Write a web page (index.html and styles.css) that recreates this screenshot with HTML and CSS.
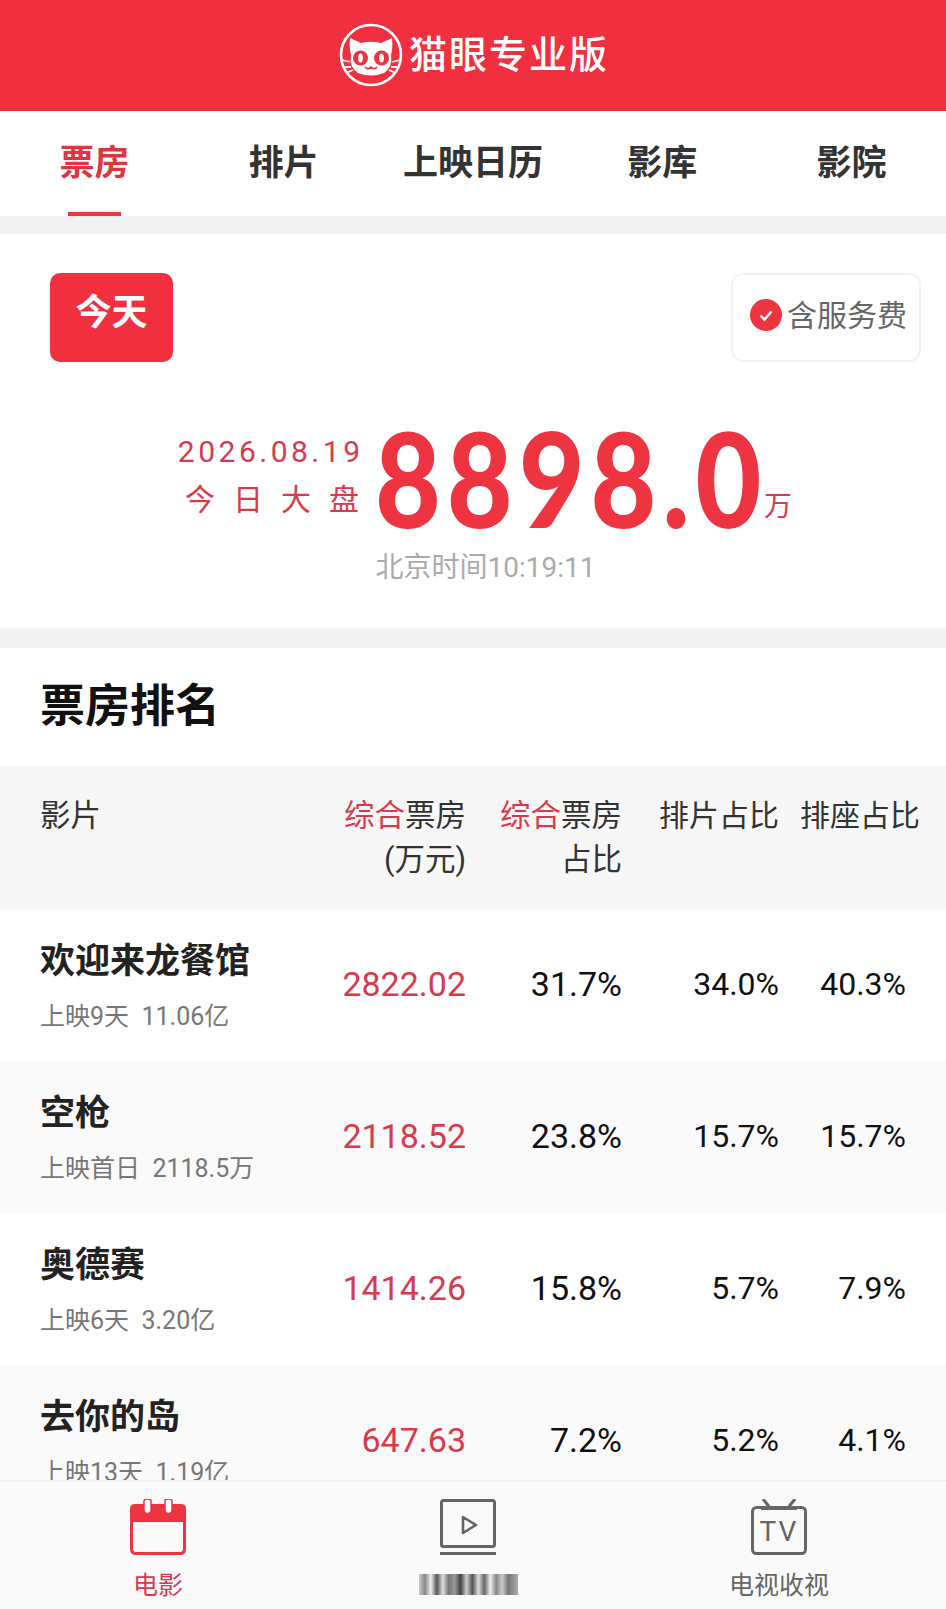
FILE: index.html
```html
<!DOCTYPE html>
<html lang="zh-CN">
  <head>
    <meta charset="UTF-8" />
    <meta name="viewport" content="width=device-width, initial-scale=1.0" />
    <title>猫眼专业版</title>
    <link rel="stylesheet" href="styles.css" />
  </head>
  <body>
    <div class="page">
      <header class="top-bar">
        <svg class="logo" viewBox="0 0 64 64" width="64" height="64">
          <circle cx="32" cy="32" r="30" fill="none" stroke="#fff" stroke-width="2.6" />
          <path d="M11 15 L22 20 Q32 17.5 42 20 L53 15 Q54 25 52 32 Q54 44 45 50 Q32 55 19 50 Q10 44 12 32 Q10 25 11 15 Z" fill="#fff" />
          <circle cx="21.5" cy="35" r="7.5" fill="#f1303f" />
          <circle cx="42.5" cy="35" r="7.5" fill="#f1303f" />
          <ellipse cx="21.5" cy="35" rx="2.4" ry="4.6" fill="#fff" />
          <ellipse cx="42.5" cy="35" rx="2.4" ry="4.6" fill="#fff" />
          <path d="M26 44 Q29 47.500 32 44 Q35 47.500 38 44" fill="none" stroke="#f1303f" stroke-width="1.6" />
          <path d="M3 37 L11 39 M4 44 L12 44 M7 50 L14 47 M61 37 L53 39 M60 44 L52 44 M57 50 L50 47" stroke="#fff" stroke-width="1.8" />
        </svg>
        <span class="brand">猫眼专业版</span>
      </header>

      <nav class="tabs">
        <a class="tab active">票房</a>
        <a class="tab">排片</a>
        <a class="tab">上映日历</a>
        <a class="tab">影库</a>
        <a class="tab">影院</a>
      </nav>

      <section class="summary">
        <div class="filters">
          <div class="today-btn">今天</div>
          <div class="fee-btn">
            <svg class="check" viewBox="0 0 32 32" width="32" height="32">
              <circle cx="16" cy="16" r="16" fill="#ee3440" />
              <path d="M10.500 16.500 L14.500 20.500 L21.500 12.500" fill="none" stroke="#fff" stroke-width="2.4" />
            </svg>
            <span>含服务费</span>
          </div>
        </div>
        <div class="total">
          <div class="total-label">
            <div class="total-date">2026.08.19</div>
            <div class="total-name">今日大盘</div>
          </div>
          <div class="total-num">8898.0</div>
          <div class="total-unit">万</div>
        </div>
        <div class="clock">北京时间10:19:11</div>
      </section>

      <section class="rank">
        <h2 class="rank-title">票房排名</h2>
        <div class="rank-head">
          <div>影片</div>
          <div class="num"><em>综合</em>票房<br />(万元)</div>
          <div class="num"><em>综合</em>票房<br />占比</div>
          <div class="num">排片占比</div>
          <div class="num">排座占比</div>
        </div>

        <div class="row">
          <div class="film-cell">
            <div class="film">欢迎来龙餐馆</div>
            <div class="film-sub">上映9天&nbsp; 11.06亿</div>
          </div>
          <div class="num money">2822.02</div>
          <div class="num">31.7%</div>
          <div class="num">34.0%</div>
          <div class="num">40.3%</div>
        </div>
        <div class="row alt">
          <div class="film-cell">
            <div class="film">空枪</div>
            <div class="film-sub">上映首日&nbsp; 2118.5万</div>
          </div>
          <div class="num money">2118.52</div>
          <div class="num">23.8%</div>
          <div class="num">15.7%</div>
          <div class="num">15.7%</div>
        </div>
        <div class="row">
          <div class="film-cell">
            <div class="film">奥德赛</div>
            <div class="film-sub">上映6天&nbsp; 3.20亿</div>
          </div>
          <div class="num money">1414.26</div>
          <div class="num">15.8%</div>
          <div class="num">5.7%</div>
          <div class="num">7.9%</div>
        </div>
        <div class="row alt">
          <div class="film-cell">
            <div class="film">去你的岛</div>
            <div class="film-sub">上映13天&nbsp; 1.19亿</div>
          </div>
          <div class="num money">647.63</div>
          <div class="num">7.2%</div>
          <div class="num">5.2%</div>
          <div class="num">4.1%</div>
        </div>
      </section>

      <footer class="bottom-bar">
        <div class="bottom-item active">
          <svg viewBox="0 0 56 56" width="56" height="56">
            <path d="M1.500 22 V50 Q1.500 54.500 6 54.500 H50 Q54.500 54.500 54.500 50 V22" fill="none" stroke="#ee3440" stroke-width="3" />
            <path d="M0 23 V10 Q0 5 5 5 H51 Q56 5 56 10 V23 Z" fill="#ee3440" />
            <path d="M14 2 V11 A3.500 3.500 0 0 0 21 11 V2 A3.500 2 0 0 0 14 2 Z M35 2 V11 A3.500 3.500 0 0 0 42 11 V2 A3.500 2 0 0 0 35 2 Z" fill="#fff" stroke="#ee3440" stroke-width="1.500" />
          </svg>
          <span>电影</span>
        </div>
        <div class="bottom-item">
          <svg viewBox="0 0 56 56" width="56" height="56">
            <rect x="1.500" y="1.500" width="53" height="46" rx="2" fill="none" stroke="#666" stroke-width="3" />
            <path d="M23 18 L36 26 L23 34 Z" fill="none" stroke="#666" stroke-width="2.600" stroke-linejoin="round" />
            <rect x="0" y="53" width="56" height="3" fill="#666" />
          </svg>
          <span class="blurred"></span>
        </div>
        <div class="bottom-item">
          <svg viewBox="0 0 56 56" width="56" height="56">
            <path d="M12 0 L18 7.500 M44 0 L38 7.500" stroke="#666" stroke-width="3" />
            <rect x="1.500" y="8.500" width="53" height="46" rx="4" fill="none" stroke="#666" stroke-width="3" />
            <path d="M10 8.500 H46 V11 H10 Z" fill="#666" />
            <text x="28" y="42" text-anchor="middle" class="tv-text">TV</text>
          </svg>
          <span>电视收视</span>
        </div>
      </footer>
    </div>
  </body>
</html>
```

FILE: styles.css
```css
* {
  margin: 0;
  padding: 0;
  box-sizing: border-box;
}

html,
body {
  height: 100%;
  overflow: hidden;
}

body {
  background-color: #f3f3f3;
  color: #222;
  font-family: "Roboto", "Noto Sans CJK SC", sans-serif;
}

.page {
  position: relative;
  height: 1609px;
  overflow: hidden;
}

.top-bar {
  display: flex;
  justify-content: center;
  align-items: center;
  gap: 6px;
  height: 111px;
  padding: 0 0 2px 2px;
  background-color: #f1303f;
}

.brand {
  margin-bottom: 6px;
  color: #fff;
  font-size: 38px;
  font-weight: 500;
  letter-spacing: 2px;
}

.tabs {
  display: grid;
  grid-template-columns: repeat(5, 1fr);
  height: 105px;
  background-color: #fff;
}

.tab {
  position: relative;
  padding-top: 28px;
  text-align: center;
  font-size: 35px;
  font-weight: 700;
  line-height: 50px;
  color: #333;
}

.tab.active {
  color: #e0343f;
}

.tab.active::after {
  content: "";
  position: absolute;
  left: 68px;
  bottom: 0;
  width: 53px;
  height: 4px;
  background-color: #ee3440;
}

.summary {
  height: 394px;
  margin-top: 18px;
  padding-top: 39px;
  background-color: #fff;
}

.filters {
  display: flex;
  justify-content: space-between;
  padding: 0 25px 0 50px;
}

.today-btn {
  width: 123px;
  height: 89px;
  padding-top: 15px;
  border-radius: 10px;
  background-color: #f1303f;
  color: #fff;
  font-size: 36px;
  font-weight: 700;
  line-height: 50px;
  text-align: center;
}

.fee-btn {
  display: flex;
  align-items: flex-start;
  gap: 5px;
  width: 190px;
  height: 89px;
  padding: 24px 0 0 17px;
  border: 2px solid #f2f2f2;
  border-radius: 12px;
  color: #666;
  font-size: 30px;
  line-height: 34px;
}

.total {
  display: flex;
  align-items: flex-end;
  height: 125px;
  margin-top: 60px;
  padding-left: 171px;
  color: #ee3440;
}

.total-label {
  width: 190px;
  margin-right: 14px;
  padding-bottom: 23px;
  color: #d83a4c;
  font-size: 30px;
  line-height: 48px;
  text-align: right;
}

.total-date {
  letter-spacing: 3.500px;
  margin-right: -2.500px;
}

.total-name {
  letter-spacing: 18px;
  margin-right: -16px;
}

.total-num {
  width: 389px;
  margin-bottom: 20px;
  font-family: "Lato", sans-serif;
  font-size: 132px;
  font-weight: 900;
  line-height: 100px;
  letter-spacing: 7px;
  white-space: nowrap;
  transform: scaleX(0.86);
  transform-origin: left bottom;
}

.total-unit {
  padding-bottom: 22px;
  font-size: 28px;
  line-height: 36px;
  color: #d83a4c;
}

.clock {
  margin: 3px 0 0 25px;
  color: #ababab;
  font-size: 28px;
  line-height: 36px;
  text-align: center;
}

.rank {
  margin-top: 20px;
  background-color: #fff;
}

.rank-title {
  height: 118px;
  padding: 28px 0 0 40px;
  color: #111;
  font-size: 45px;
  font-weight: 700;
  line-height: 62px;
}

.rank-head,
.row {
  display: grid;
  padding: 0 40px;
  color: #111;
}

.rank-head {
  grid-template-columns: 1fr 156px 156px 157px 141px;
  height: 143px;
  padding: 28px 26px 0 40px;
  background-color: #f7f7f7;
  color: #333;
  font-size: 30.500px;
  line-height: 44px;
}

.rank-head .num:nth-child(n + 4) {
  font-size: 30px;
}

.rank-head em {
  font-style: normal;
  color: #d83a4c;
}

.row {
  grid-template-columns: 1fr 156px 156px 157px 127px;
  align-items: center;
  height: 152px;
}

.row:first-of-type {
  height: 155px;
}

.row.alt {
  background-color: #fafafa;
}

.num {
  text-align: right;
  white-space: nowrap;
}

.row .num {
  margin-bottom: 3px;
  font-size: 34px;
}

.row .num:nth-child(n + 4) {
  font-size: 32px;
}

.row .money {
  color: #d83a4c;
}

.film-cell {
  padding-top: 3px;
}

.film {
  margin-top: -2px;
  color: #222;
  font-size: 35px;
  font-weight: 700;
  line-height: 50px;
}

.film-sub {
  margin-top: 12px;
  color: #777;
  font-size: 25px;
  line-height: 36px;
}

.bottom-bar {
  position: absolute;
  left: 0;
  right: 0;
  top: 1480px;
  display: grid;
  grid-template-columns: 316px 304px 318px;
  height: 129px;
  border-top: 2px solid #f0f0f0;
  background-color: #fafafa;
}

.bottom-item {
  display: flex;
  flex-direction: column;
  align-items: center;
  gap: 16px;
  padding-top: 17px;
  color: #666;
  font-size: 25px;
  line-height: 30px;
}

.bottom-item.active {
  color: #d83a4c;
}

.tv-text {
  font-family: "Roboto", sans-serif;
  font-size: 28px;
  font-weight: 400;
  letter-spacing: 2px;
  fill: #666;
}

.blurred {
  width: 99px;
  height: 21px;
  margin-top: 3px;
  background: linear-gradient(90deg, #ccc 0, #888 6%, #eee 12%, #555 18%, #ddd 24%, #777 30%, #999 36%, #444 42%, #ccc 48%, #555 54%, #ddd 60%, #666 66%, #eee 72%, #888 78%, #ccc 84%, #777 90%, #aaa 100%);
}
```
